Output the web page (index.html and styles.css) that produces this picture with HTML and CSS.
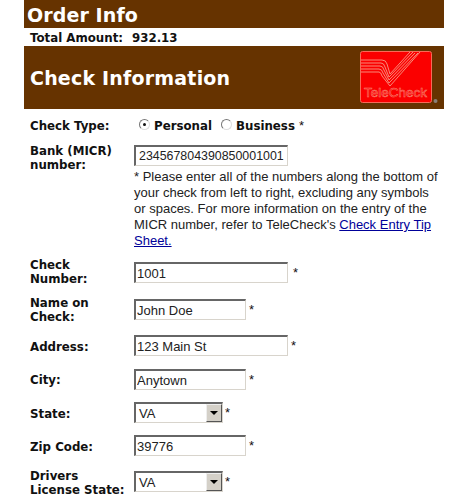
FILE: index.html
```html
<!DOCTYPE html>
<html lang="en">
<head>
<meta charset="utf-8">
<title>Check Information</title>
<link rel="stylesheet" href="styles.css">
</head>
<body>
<main class="page">
  <h1 class="bar-order">Order Info</h1>
  <p class="total"><span>Total Amount:</span><span>932.13</span></p>
  <header class="bar-check">
    <h2>Check Information</h2>
    <svg class="logo" width="84" height="56" viewBox="0 0 84 56" aria-label="TeleCheck logo">
      <rect x="0.5" y="0.5" width="71" height="51" rx="2" fill="#fb0000" stroke="#f86a58"/>
      <g fill="none" stroke="#f88a78" stroke-width="1">
        <path d="M1 9H22Q26 9 27 13L30 23L50 1"/>
        <path d="M1 12H21Q24 12 25 16L29 26L53 1"/>
        <path d="M1 15H20Q23 15 24 19L29 29L55 2"/>
        <path d="M1 18H19Q22 18 23 22L29 32L58 2"/>
        <path d="M1 21H19Q21 21 22 25L30 35L60 1"/>
      </g>
      <text class="logo-text" x="4" y="46">TeleCheck</text>
      <circle cx="75.500" cy="50" r="2" fill="#8a8078"/>
    </svg>
  </header>
  <form class="form">
    <div class="row row-type">
      <div class="label">Check Type:</div>
      <div class="radios">
        <span class="radio on"></span><span class="opt">Personal</span>
        <span class="radio second"></span><span class="opt">Business</span><span class="star">*</span>
      </div>
    </div>
    <div class="row row-micr">
      <div class="label lift1">Bank (MICR)<br>number:</div>
      <div class="field">
        <input class="input w154 micr" type="text" value="234567804390850001001">
        <p class="note">* Please enter all of the numbers along the bottom of your check from left to right, excluding any symbols or spaces. For more information on the entry of the MICR number, refer to TeleCheck's <a href="#">Check Entry Tip Sheet.</a></p>
      </div>
    </div>
    <div class="row row-num">
      <div class="label lift4">Check<br>Number:</div>
      <div class="field line"><input class="input w154" type="text" value="1001"><span class="star gap6">*</span></div>
    </div>
    <div class="row row-name">
      <div class="label lift3">Name on<br>Check:</div>
      <div class="field line"><input class="input w112" type="text" value="John Doe"><span class="star">*</span></div>
    </div>
    <div class="row row-addr">
      <div class="label drop5">Address:</div>
      <div class="field line"><input class="input w154" type="text" value="123 Main St"><span class="star">*</span></div>
    </div>
    <div class="row row-city">
      <div class="label drop4">City:</div>
      <div class="field line"><input class="input w112" type="text" value="Anytown"><span class="star">*</span></div>
    </div>
    <div class="row row-state">
      <div class="label drop5">State:</div>
      <div class="field line">
        <div class="select"><span>VA</span><span class="arrow"></span></div><span class="star tight">*</span>
      </div>
    </div>
    <div class="row row-zip">
      <div class="label drop5">Zip Code:</div>
      <div class="field line"><input class="input w112" type="text" value="39776"><span class="star">*</span></div>
    </div>
    <div class="row row-lic">
      <div class="label lift2">Drivers<br>License State:</div>
      <div class="field line">
        <div class="select"><span>VA</span><span class="arrow"></span></div><span class="star tight">*</span>
      </div>
    </div>
  </form>
</main>
</body>
</html>
```
FILE: styles.css
```css
html, body { margin: 0; padding: 0; background: #fff; height: 499px; overflow: hidden; }
.page { width: 420px; margin-left: 24px; font-family: "Liberation Sans", Arial, sans-serif; color: #111; }
.bar-order { margin: 0; height: 28px; background: #663300; color: #fff; font: bold 19px/30px "DejaVu Sans", sans-serif; padding-left: 3px; letter-spacing: 0.1px; }
.total { margin: 0; height: 18px; padding-left: 6px; font: bold 11.8px/20px "DejaVu Sans", sans-serif; display: flex; gap: 9px; }
.bar-check { height: 63px; background: #663300; display: flex; align-items: flex-start; justify-content: space-between; }
.bar-check h2 { margin: 21px 0 0 6px; color: #fff; font: bold 19px/22px "DejaVu Sans", sans-serif; letter-spacing: 0.2px; }
.logo { margin: 5px 0 0 0; }
.logo-text { font: 13.5px "Liberation Sans", sans-serif; fill: #fb0000; stroke: #f88a78; stroke-width: 0.5px; }
.form { padding-left: 6px; }
.row { display: grid; grid-template-columns: 104px 1fr; align-items: start; box-sizing: border-box; }
.label { font: bold 11.8px/14px "DejaVu Sans", sans-serif; color: #111; white-space: nowrap; }
.lift1 { margin-top: -1px; }
.lift2 { margin-top: -2px; }
.lift3 { margin-top: -3px; }
.lift4 { margin-top: -4px; }
.drop4 { margin-top: 4px; }
.drop5 { margin-top: 5px; }
.field { min-width: 0; }
.line { display: flex; align-items: center; height: 21px; }
.input { box-sizing: border-box; display: block; height: 21px; margin: 0; padding: 0 0 0 1px; font: 13px "Liberation Sans", sans-serif; color: #222; background: #fff; border-style: solid; border-width: 2px 1px 1px 2px; border-color: #666 #d8d4cc #d8d4cc #666; outline: 0; }
.w154 { width: 154px; }
.w112 { width: 112px; }
.micr { font-size: 12.4px; padding-left: 3px; }
.star { font: 13px/16px "Liberation Sans", sans-serif; margin-left: 3px; }
.gap6 { margin-left: 5px; }
.tight { margin-left: 2px; }
.note { margin: 3px 0 0; font-size: 13px; line-height: 16px; width: 306px; color: #222; }
.note a { color: #000099; }
.radios { display: flex; align-items: center; height: 14px; font: bold 11.8px/14px "DejaVu Sans", sans-serif; }
.radio { box-sizing: border-box; width: 11px; height: 11px; border-radius: 50%; border: 1px solid #777; border-right-color: #ddd; border-bottom-color: #ddd; background: #fff; margin: -3px 4px 0 5px; position: relative; }
.radio.on::after { content: ""; position: absolute; left: 3px; top: 3px; width: 3px; height: 3px; border-radius: 50%; background: #111; }
.radio.second { margin-left: 9px; }
.radios .star { margin-left: 4px; }
.select { box-sizing: border-box; width: 89px; height: 21px; display: flex; align-items: center; justify-content: space-between; padding-left: 3px; font: 13px "Liberation Sans", sans-serif; color: #222; border-style: solid; border-width: 2px 1px 1px 2px; border-color: #666 #d8d4cc #d8d4cc #666; background: #fff; }
.arrow { box-sizing: border-box; width: 16px; height: 18px; background: #d4d0c8; border: 1px solid; border-color: #eee #555 #555 #eee; position: relative; }
.arrow::after { content: ""; position: absolute; left: 3px; top: 6px; border: 4px solid transparent; border-top: 4px solid #000; border-bottom: 0; }
.row-type { padding-top: 10px; height: 36px; }
.row-micr { height: 117px; }
.row-num { height: 37px; }
.row-name { height: 36px; }
.row-addr { height: 34px; }
.row-city { height: 33px; }
.row-state { height: 33px; }
.row-zip { height: 36px; }
.row-lic { height: 28px; }
```
